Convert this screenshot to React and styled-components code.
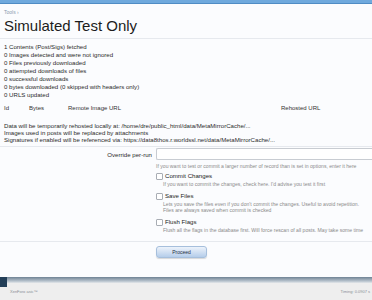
import React from 'react'
import styled, { createGlobalStyle } from 'styled-components'

const stats = [
  '1 Contents (Post/Sigs) fetched',
  '0 Images detected and were not ignored',
  '0 Files previously downloaded',
  '0 attempted downloads of files',
  '0 successful downloads',
  '0 bytes downloaded (0 skipped with headers only)',
  '0 URLS updated',
]

const info = [
  'Data will be temporarily rehosted locally at: /home/dre/public_html/data/MetaMirrorCache/...',
  'Images used in posts will be replaced by attachments',
  'Signatures if enabled will be referenced via: https://data8thos.r.worldssl.net/data/MetaMirrorCache/...',
]

const options = [
  {
    label: 'Commit Changes',
    hint: "If you want to commit the changes, check here. I'd advise you test it first",
  },
  {
    label: 'Save Files',
    hint: "Lets you save the files even if you don't commit the changes. Useful to avoid repetition. Files are always saved when commit is checked",
  },
  {
    label: 'Flush Flags',
    hint: 'Flush all the flags in the database first. Will force rescan of all posts. May take some time',
  },
]

const App = () => (
  <>
    <GlobalStyle />
    <TopBar />
    <Main>
      <Crumb>Tools ›</Crumb>
      <Title>Simulated Test Only</Title>
      <Stats>
        {stats.map((s) => (
          <Line key={s}>{s}</Line>
        ))}
      </Stats>
      <TableHead>
        <span>Id</span>
        <span>Bytes</span>
        <span>Remote Image URL</span>
        <span>Rehosted URL</span>
      </TableHead>
      <Info>
        {info.map((s) => (
          <Line tight key={s}>{s}</Line>
        ))}
      </Info>
      <FormRow bordered>
        <Label>Override per-run</Label>
        <div>
          <Input />
          <Hint>If you want to test or commit a larger number of record than is set in options, enter it here</Hint>
          <Options>
            {options.map((o) => (
              <div key={o.label}>
                <Check>
                  <Box />
                  {o.label}
                </Check>
                <Hint indent>{o.hint}</Hint>
              </div>
            ))}
          </Options>
        </div>
      </FormRow>
      <FormRow>
        <span />
        <div>
          <Button>Proceed</Button>
        </div>
      </FormRow>
    </Main>
    <Footer>
      <FooterBand>
        <Corner />
      </FooterBand>
      <FooterText>
        <span>XenForo asic™</span>
        <span>Timing: 0.0907 s</span>
      </FooterText>
    </Footer>
  </>
)

const GlobalStyle = createGlobalStyle`
  body {
    margin: 0;
    background: #fbfcfe;
    font-family: 'Liberation Sans', Arial, sans-serif;
    color: #2b2b2b;
    overflow: hidden;
  }
`

const TopBar = styled.div`
  height: 3px;
  background: #6fa9dd;
  border-bottom: 1px solid #4f8cc4;
`

const Main = styled.div`
  height: 268px;
`

const Crumb = styled.div`
  font-size: 5px;
  color: #8a9aae;
  margin: 5px 0 0 4px;
  height: 7px;
`

const Title = styled.h1`
  margin: 0;
  font-family: 'Liberation Sans Narrow', 'Liberation Sans', Arial, sans-serif;
  font-weight: normal;
  font-size: 15px;
  line-height: 20px;
  color: #1c1c1c;
  border-bottom: 1px solid #e6e9ee;
  padding: 0 0 2px 4px;
`

const Stats = styled.div`
  padding: 4px 0 0 4px;
`

const Line = styled.div`
  font-size: 6.1px;
  line-height: ${(p) => (p.tight ? '7px' : '8px')};
  white-space: nowrap;
`

const TableHead = styled.div`
  display: grid;
  grid-template-columns: 25px 39px 213px auto;
  font-size: 6px;
  line-height: 8px;
  margin-top: 5px;
  padding-left: 4px;
  color: #333;
`

const Info = styled.div`
  margin-top: 10px;
  padding: 0 0 3px 4px;
  border-bottom: 1px solid #e6e9ee;
`

const FormRow = styled.div`
  display: grid;
  grid-template-columns: 152px 1fr;
  column-gap: 4px;
  padding: ${(p) => (p.bordered ? '1px 2px 8px 0' : '4px 0 0')};
  border-bottom: ${(p) => (p.bordered ? '1px solid #e6e9ee' : 'none')};
`

const Label = styled.div`
  text-align: right;
  font-size: 6.1px;
  padding-top: 3px;
`

const Input = styled.div`
  height: 10px;
  margin-right: -2px;
  border: 1px solid #c8ccd2;
  border-right: none;
  border-radius: 2px 0 0 2px;
  background: #fff;
`

const Hint = styled.div`
  font-size: 5.1px;
  line-height: 6.3px;
  color: #8a8a8a;
  margin-top: ${(p) => (p.indent ? '1px' : '3px')};
  padding-left: ${(p) => (p.indent ? '7px' : '0')};
  white-space: ${(p) => (p.indent ? 'normal' : 'nowrap')};
`

const Options = styled.div`
  display: flex;
  flex-direction: column;
  gap: 4.5px;
  margin-top: 3px;
`

const Check = styled.label`
  display: flex;
  align-items: center;
  gap: 2px;
  font-size: 6.1px;
  line-height: 8px;
  color: #222;
`

const Box = styled.span`
  width: 5px;
  height: 5px;
  border: 1px solid #a8adb4;
  border-radius: 1px;
  background: #fff;
`

const Button = styled.div`
  width: 49px;
  height: 10px;
  border-radius: 3px;
  background: linear-gradient(#edf3fb, #b5cdea);
  border: 1px solid #a6bfdc;
  font-size: 5px;
  line-height: 10px;
  text-align: center;
  color: #1d2c44;
  box-shadow: 0 1px 1px rgba(0, 0, 0, 0.15);
`

const Footer = styled.div`
  background: #eeeeee;
  height: 28px;
`

const FooterBand = styled.div`
  height: 6px;
  background: linear-gradient(#6e8294, #b9c4ce 70%, #e4e7ea);
  position: relative;
`

const Corner = styled.div`
  position: absolute;
  left: 0;
  top: 0;
  width: 7px;
  height: 10px;
  background: #233f58;
`

const FooterText = styled.div`
  display: flex;
  justify-content: space-between;
  font-size: 4px;
  color: #8a8f96;
  padding: 6px 2px 0 10px;
`

export default App
